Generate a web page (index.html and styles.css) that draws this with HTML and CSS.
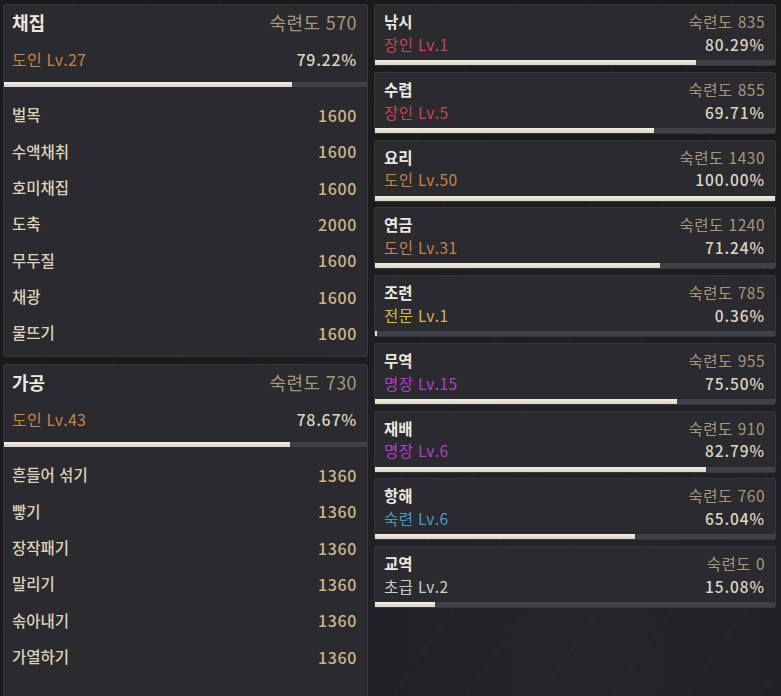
FILE: index.html
```html
<!DOCTYPE html>
<html lang="ko">
<head>
<meta charset="utf-8">
<title>생활 숙련도</title>
<link rel="stylesheet" href="styles.css">
</head>
<body>
<div class="screen">
  <div class="left">
    <section class="panel panel-gather">
      <div class="p-title"><span class="name">채집</span><span class="mastery">숙련도 570</span></div>
      <div class="p-level"><span class="lv c-doin">도인 Lv.27</span><span class="pct">79.22%</span></div>
      <div class="bar"><div class="fill" style="width:79.22%"></div></div>
      <ul class="rows">
        <li><span>벌목</span><span class="val">1600</span></li>
        <li><span>수액채취</span><span class="val">1600</span></li>
        <li><span>호미채집</span><span class="val">1600</span></li>
        <li><span>도축</span><span class="val">2000</span></li>
        <li><span>무두질</span><span class="val">1600</span></li>
        <li><span>채광</span><span class="val">1600</span></li>
        <li><span>물뜨기</span><span class="val">1600</span></li>
      </ul>
    </section>
    <section class="panel panel-process">
      <div class="p-title"><span class="name">가공</span><span class="mastery">숙련도 730</span></div>
      <div class="p-level"><span class="lv c-doin">도인 Lv.43</span><span class="pct">78.67%</span></div>
      <div class="bar"><div class="fill" style="width:78.67%"></div></div>
      <ul class="rows">
        <li><span>흔들어 섞기</span><span class="val">1360</span></li>
        <li><span>빻기</span><span class="val">1360</span></li>
        <li><span>장작패기</span><span class="val">1360</span></li>
        <li><span>말리기</span><span class="val">1360</span></li>
        <li><span>솎아내기</span><span class="val">1360</span></li>
        <li><span>가열하기</span><span class="val">1360</span></li>
      </ul>
    </section>
  </div>
  <div class="right">
    <section class="card">
      <div class="c-row c-top"><span class="name">낚시</span><span class="mastery">숙련도 835</span></div>
      <div class="c-row c-bot"><span class="lv c-jangin">장인 Lv.1</span><span class="pct">80.29%</span></div>
      <div class="bar"><div class="fill" style="width:80.29%"></div></div>
    </section>
    <section class="card">
      <div class="c-row c-top"><span class="name">수렵</span><span class="mastery">숙련도 855</span></div>
      <div class="c-row c-bot"><span class="lv c-jangin">장인 Lv.5</span><span class="pct">69.71%</span></div>
      <div class="bar"><div class="fill" style="width:69.71%"></div></div>
    </section>
    <section class="card">
      <div class="c-row c-top"><span class="name">요리</span><span class="mastery">숙련도 1430</span></div>
      <div class="c-row c-bot"><span class="lv c-doin">도인 Lv.50</span><span class="pct">100.00%</span></div>
      <div class="bar"><div class="fill" style="width:100%"></div></div>
    </section>
    <section class="card">
      <div class="c-row c-top"><span class="name">연금</span><span class="mastery">숙련도 1240</span></div>
      <div class="c-row c-bot"><span class="lv c-doin">도인 Lv.31</span><span class="pct">71.24%</span></div>
      <div class="bar"><div class="fill" style="width:71.24%"></div></div>
    </section>
    <section class="card">
      <div class="c-row c-top"><span class="name">조련</span><span class="mastery">숙련도 785</span></div>
      <div class="c-row c-bot"><span class="lv c-jeonmun">전문 Lv.1</span><span class="pct">0.36%</span></div>
      <div class="bar"><div class="fill" style="width:0.5%"></div></div>
    </section>
    <section class="card">
      <div class="c-row c-top"><span class="name">무역</span><span class="mastery">숙련도 955</span></div>
      <div class="c-row c-bot"><span class="lv c-myeongjang">명장 Lv.15</span><span class="pct">75.50%</span></div>
      <div class="bar"><div class="fill" style="width:75.5%"></div></div>
    </section>
    <section class="card">
      <div class="c-row c-top"><span class="name">재배</span><span class="mastery">숙련도 910</span></div>
      <div class="c-row c-bot"><span class="lv c-myeongjang">명장 Lv.6</span><span class="pct">82.79%</span></div>
      <div class="bar"><div class="fill" style="width:82.79%"></div></div>
    </section>
    <section class="card">
      <div class="c-row c-top"><span class="name">항해</span><span class="mastery">숙련도 760</span></div>
      <div class="c-row c-bot"><span class="lv c-sukryeon">숙련 Lv.6</span><span class="pct">65.04%</span></div>
      <div class="bar"><div class="fill" style="width:65.04%"></div></div>
    </section>
    <section class="card">
      <div class="c-row c-top"><span class="name">교역</span><span class="mastery">숙련도 0</span></div>
      <div class="c-row c-bot"><span class="lv c-chogeup">초급 Lv.2</span><span class="pct">15.08%</span></div>
      <div class="bar"><div class="fill" style="width:15.08%"></div></div>
    </section>
  </div>
</div>
</body>
</html>
```

FILE: styles.css
```css
html, body {
  margin: 0;
  padding: 0;
  height: 100%;
  overflow: hidden;
  background: #1c1c20;
}

body {
  font-family: "Noto Sans CJK KR", "Noto Sans", sans-serif;
  color: #d8cfbe;
  background:
    repeating-linear-gradient(125deg, rgba(255,255,255,0.012) 0 2px, transparent 2px 60px),
    radial-gradient(ellipse at 75% 95%, #25262a 0%, #1b1b1e 60%);
}

.screen {
  display: flex;
  gap: 6px;
  padding: 4px 5px 0 3px;
  height: 696px;
  box-sizing: border-box;
  overflow: hidden;
}

.left {
  width: 365px;
  display: flex;
  flex-direction: column;
  gap: 7px;
  flex: none;
}

.right {
  width: 402px;
  display: flex;
  flex-direction: column;
  gap: 5.75px;
  flex: none;
}

.panel {
  background: #2a2a2f;
  border: 1px solid #36363c;
  border-radius: 2px;
  box-sizing: border-box;
  flex: none;
}

.panel-gather { height: 353px; }
.panel-process { height: 345px; }

.p-title, .p-level, .rows li, .c-row {
  display: flex;
  justify-content: space-between;
  align-items: center;
}

.p-title span, .p-level span, .rows li span, .c-row span {
  line-height: 1.15;
}

.p-title {
  height: 35px;
  padding: 0 10px 0 8px;
}

.p-title .name {
  font-size: 18px;
  font-weight: 700;
  color: #ece8e1;
}

.p-title .mastery {
  font-size: 18px;
  letter-spacing: 0.4px;
  color: #a6977c;
}

.p-level {
  height: 38px;
  padding: 0 10px 0 8px;
}

.lv {
  font-size: 16px;
  letter-spacing: 0.2px;
}

.pct {
  font-size: 16px;
  letter-spacing: 0.7px;
  color: #dcd3c3;
  font-weight: 500;
}

.bar {
  height: 5px;
  background: #404047;
}

.panel .bar {
  margin-top: 4px;
}

.fill {
  height: 100%;
  background: linear-gradient(#f2eee4, #d9d3c3);
}

.rows {
  list-style: none;
  margin: 10px 0 0;
  padding: 0;
}

.rows li {
  height: 36.33px;
  padding: 0 10px 0 8px;
  font-size: 15.5px;
  font-weight: 500;
  color: #ddd2bc;
}

.rows .val {
  font-size: 16px;
  letter-spacing: 0.6px;
  color: #cbb68c;
  font-weight: 500;
}

.card {
  height: 62px;
  background: #2a2a2f;
  border: 1px solid #36363c;
  border-radius: 2px;
  box-sizing: border-box;
  padding-top: 6px;
  flex: none;
}

.c-row {
  padding: 0 10px 0 9px;
}

.c-top {
  height: 22px;
}

.c-bot {
  height: 23.5px;
}

.card .name {
  font-size: 15.5px;
  font-weight: 700;
  color: #ece8e1;
}

.card .mastery {
  font-size: 15.5px;
  letter-spacing: 0.5px;
  color: #a6977c;
}

.card .lv {
  font-size: 15.5px;
  letter-spacing: 0.4px;
}

.card .pct {
  font-size: 15.5px;
  letter-spacing: 0.9px;
}

.card .bar {
  margin-top: 3.5px;
}

.c-doin { color: #c4834c; }
.c-jangin { color: #c9445a; }
.c-jeonmun { color: #d9b94f; }
.c-myeongjang { color: #b13fcb; }
.c-sukryeon { color: #4b9ccb; }
.c-chogeup { color: #cfcdc8; }
```
